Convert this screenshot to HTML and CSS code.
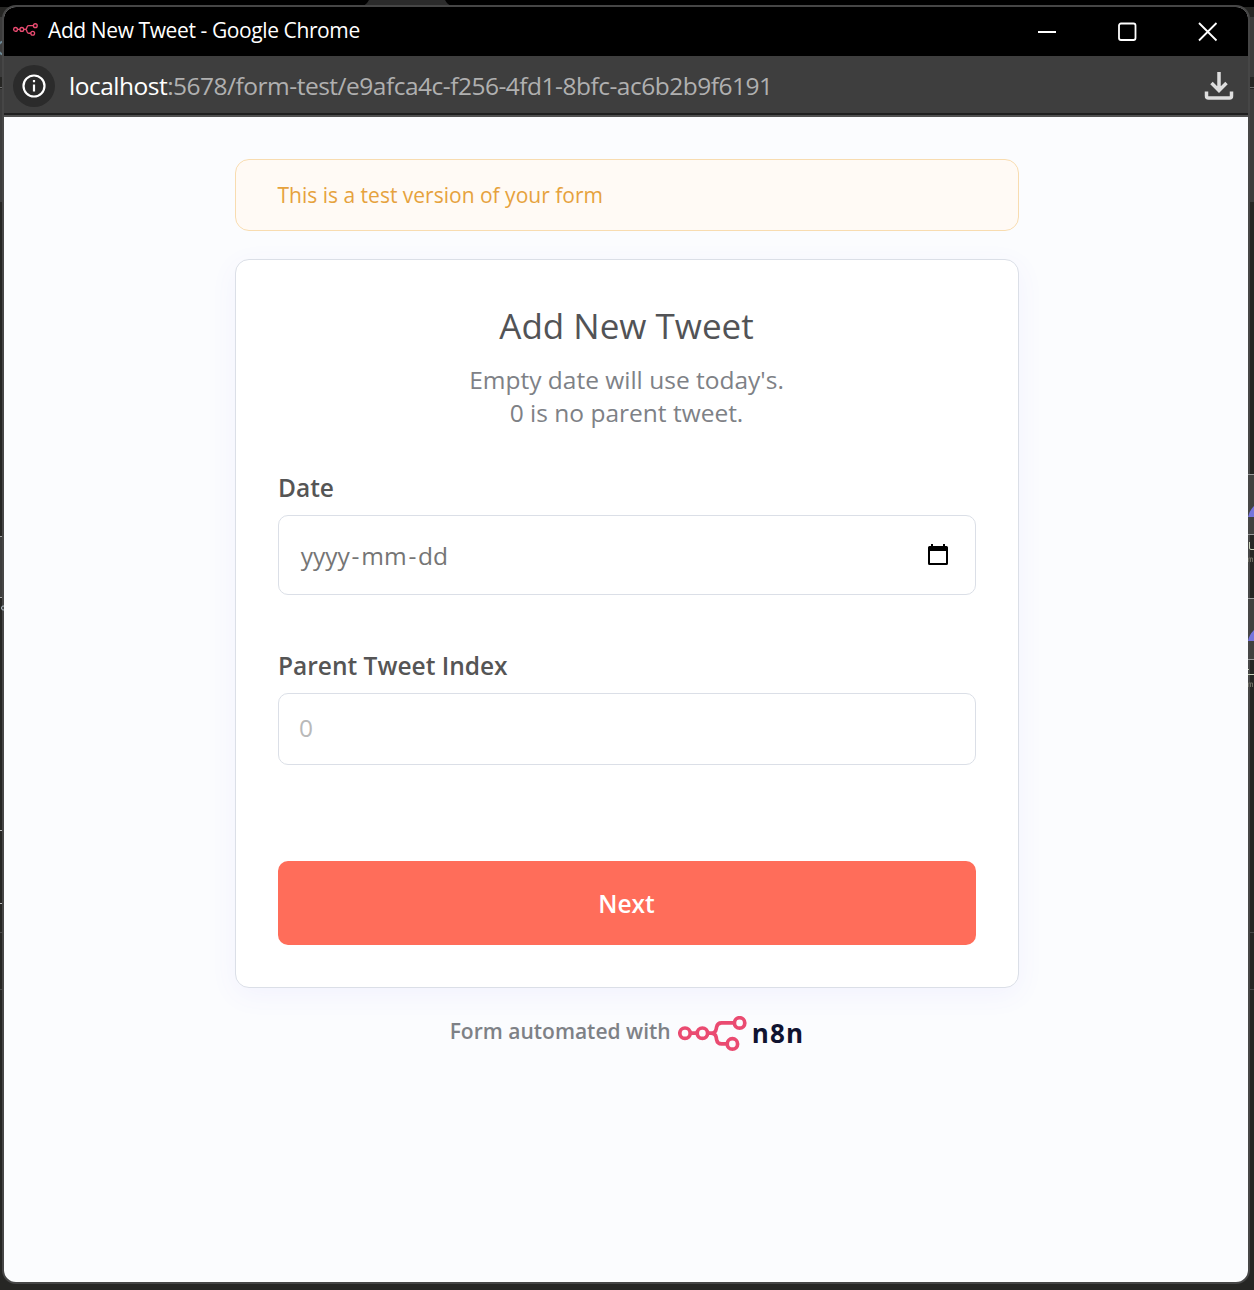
FILE: index.html
```html
<!DOCTYPE html>
<html lang="en">
<head>
<meta charset="utf-8">
<title>Add New Tweet</title>
<link rel="stylesheet" href="styles.css">
</head>
<body>
<svg class="backdrop" width="1254" height="1290" viewBox="0 0 1254 1290" aria-hidden="true">
  <path fill="#262624" d="M0 0h1254v1290H0z"/>
  <path fill="#000" d="M0 0h1254v7H0z"/>
  <path fill="#2b2b2b" d="M359 7q7-1 10-7h76q3 6 10 7z"/>
  <path fill="#3c3c3c" d="M0 17h4v60H0zM1250 17h4v60h-4zM0 89h4v113H0zM1250 89h4v113h-4zM0 537h4v60H0z"/>
  <path fill="#41413f" d="M1248 475h6v59h-6zM1248 599h6v60h-6z"/>
  <path fill="#6c6c6c" d="M0 87h4v1H0zM1250 87h4v1h-4z"/>
  <path fill="#a5a5a5" d="M0 536h4v1H0zM0 597h4v1H0z"/>
  <path fill="#bbb" d="M0 830h4v1H0zM0 903h4v1H0z"/>
  <path fill="#484848" d="M0 932h4v1H0zM0 989h4v1H0zM1250 932h4v1h-4zM1250 989h4v1h-4z"/>
  <circle cx="5" cy="48" r="7" fill="none" stroke="#6b8795" stroke-width="2"/>
</svg>
<div class="window">
  <header class="titlebar">
    <svg class="favicon" viewBox="0 0 69 35"><use href="#nodes"/></svg>
    <span class="window-title">Add New Tweet - Google Chrome</span>
    <svg class="controls" width="184" height="22" viewBox="0 0 184 22" fill="none" stroke="#fff" stroke-width="1.800">
      <path d="M0 11h18"/><rect x="81" y="2.500" width="16.500" height="16.500" rx="2"/><path d="M161 2l17.500 17.500M178.500 2L161 19.500"/>
    </svg>
  </header>
  <div class="toolbar">
    <span class="info"><svg width="24" height="24" viewBox="0 0 24 24" fill="none" stroke="#fff" stroke-width="2.200"><circle cx="12" cy="12" r="10.500"/><path d="M12 10.500v7M12 6v2.300"/></svg></span>
    <span class="url"><span class="host">localhost</span><span class="path">:5678/form-test/e9afca4c-f256-4fd1-8bfc-ac6b2b9f6191</span></span>
    <svg class="download" width="30" height="30" viewBox="0 0 30 30" fill="none" stroke="#dedede" stroke-width="3.500"><path d="M15 1v18M7.500 12l7.500 7.500 7.500-7.500M2.500 20.500v4.500q0 2 2 2h21q2 0 2-2v-4.500"/></svg>
  </div>
  <main class="page">
    <div class="notice"><span>This is a test version of your form</span></div>
    <form class="card">
      <h1>Add New Tweet</h1>
      <p class="description">Empty date will use today's.<br>0 is no parent tweet.</p>
      <div class="field">
        <span class="label">Date</span>
        <div class="input date-input">
          <span class="date-text"><span>yyyy</span>-<span>mm</span>-<span>dd</span></span>
          <svg width="20" height="22" viewBox="0 0 20 22"><path fill="#000" d="M3 0h2v2h10V0h2v2h1.500Q20 2 20 3.500v16Q20 21 18.500 21h-17Q0 21 0 19.500v-16Q0 2 1.500 2H3zM2 7v12h16V7z"/></svg>
        </div>
      </div>
      <div class="field">
        <span class="label">Parent Tweet Index</span>
        <div class="input"><span class="placeholder">0</span></div>
      </div>
      <button class="next" type="button">Next</button>
    </form>
    <footer class="footer">
      <span class="credit">Form automated with</span>
      <svg class="logo" width="69" height="35" viewBox="0 0 69 35">
        <g id="nodes" fill="none" stroke="#ea4b71" stroke-width="3.700">
          <circle cx="7" cy="17.200" r="5.200"/><circle cx="24.400" cy="17.200" r="5.200"/><circle cx="61.600" cy="6.900" r="5.200"/><circle cx="54.400" cy="27.900" r="5.200"/>
          <path d="M12.300 17.200h6.800M29.700 17.200h3.300q4.500 0 5.200-4.200l.4-2q.8-4.100 5-4.100h12.700M33 17.200q4.500 0 5.200 4.200l.4 2.300q.8 4.200 5 4.200h5.500"/>
        </g>
      </svg>
      <span class="brand">n8n</span>
    </footer>
  </main>
</div>
<svg class="edge" width="6" height="220" viewBox="0 0 6 220" aria-hidden="true">
  <path fill="#9a9a9a" d="M0 4h6v1H0zM0 64h6v1H0zM0 128h6v1H0zM0 189h6v1H0z"/>
  <path fill="#7775dc" d="M0 47q1-6 6-11v11zM0 171q1-6 6-11v11z"/>
  <path fill="none" stroke="#c7d0b9" d="M1.500 72v6q0 1.500 1.500 1.500h3M0 204.500h6M0 199.500h1"/>
  <path fill="none" stroke="#6c6b60" d="M.5 92v-4h2v4m0-4h2v4M.5 217v-4h2v4m0-4h2v4"/>
</svg>
<svg class="edge-left" width="4" height="8" viewBox="0 0 4 8" aria-hidden="true"><path fill="none" stroke="#b7c5ce" d="M4 2q-2.500-.5-2.500 2T4 6"/></svg>
</body>
</html>
```
FILE: styles.css
```css
* { box-sizing: border-box; }
body { margin: 0; width: 1254px; height: 1290px; overflow: hidden; position: relative; background: #262624; font-family: "Open Sans", sans-serif; }
svg { display: block; flex: none; }
.backdrop { position: absolute; left: 0; top: 0; }
.edge { position: absolute; left: 1248px; top: 470px; }
.edge-left { position: absolute; left: 0; top: 604px; }
.window { position: absolute; left: 2px; top: 5px; width: 1248px; height: 1279px; display: flex; flex-direction: column; border: 2px solid #464646; border-radius: 14px; overflow: hidden; background: #fbfcfe; }
.titlebar { height: 49px; flex: none; display: flex; align-items: center; background: #000; padding: 0 26px 0 9px; }
.favicon { width: 25px; height: 13px; margin-top: -4px; }
.window-title { color: #fff; font-size: 21px; line-height: 28px; letter-spacing: -.4px; margin: -4px 0 0 10px; white-space: nowrap; }
.controls { margin-left: auto; }
.toolbar { height: 61px; flex: none; display: flex; align-items: center; background: #3e3e3e; border-bottom: 2px solid #505050; box-shadow: inset 0 -2px #1f1f1f; padding: 0 14px 0 9px; }
.info { width: 42px; height: 42px; border-radius: 50%; background: #2b2b2b; display: flex; align-items: center; justify-content: center; flex: none; }
.url { font-size: 24.500px; line-height: 32px; letter-spacing: -.5px; margin-left: 14px; white-space: nowrap; color: #b0b0b0; }
.host { color: #fff; }
.download { margin-left: auto; }
.page { flex: 1; display: flex; flex-direction: column; align-items: center; padding: 42px 0 0 2px; }
.notice { width: 784px; height: 72px; flex: none; border: 1px solid #f8dcb0; border-radius: 14px; background: #fffaf5; color: #e6a23d; font-size: 21px; display: flex; align-items: center; padding-left: 41.500px; }
.card { width: 784px; height: 729px; flex: none; margin: 28px 0; border: 1px solid #dbdfe7; border-radius: 14px; background: #fff; box-shadow: 0 7px 28px rgba(99, 77, 255, .06); padding: 42px; display: flex; flex-direction: column; }
h1 { margin: 0 1px 0 0; font-size: 35px; line-height: 48px; font-weight: 400; color: #525356; text-align: center; }
.description { margin: 13px 1px 42px 0; font-size: 24.500px; line-height: 33px; color: #7e8186; text-align: center; }
.field { display: flex; flex-direction: column; gap: 11px; margin-bottom: 54px; }
.label { font-size: 24.500px; line-height: 33px; font-weight: 600; color: #555; }
.input { height: 72px; border: 1px solid #dbdfe7; border-radius: 10px; display: flex; align-items: center; justify-content: space-between; padding: 0 27px 0 20px; font-size: 24.500px; color: #757575; }
.date-input { height: 80px; }
.date-text span { padding: 0 1.750px; }
.placeholder { color: #b9b9b9; margin-top: -4px; }
.next { height: 84px; margin-top: 42px; flex: none; border: 0; border-radius: 10px; background: #ff6d5a; color: #fff; font: 600 24.500px "Open Sans", sans-serif; padding: 0 1px 0 0; }
.footer { height: 35px; display: flex; align-items: center; }
.credit { font-size: 21px; line-height: 28px; font-weight: 600; color: #7e8186; margin-top: -5px; white-space: nowrap; }
.logo { margin-left: 7px; }
.brand { margin-left: 5px; font-size: 26px; line-height: 35px; letter-spacing: 1.200px; font-weight: 700; color: #101330; }
```
